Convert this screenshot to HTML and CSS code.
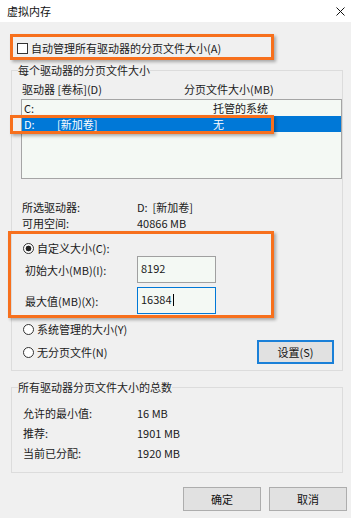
FILE: index.html
```html
<!DOCTYPE html>
<html lang="zh-CN">
  <head>
    <meta charset="UTF-8" />
    <meta name="viewport" content="width=device-width, initial-scale=1.0" />
    <title>虚拟内存</title>
    <link rel="stylesheet" href="styles.css">
  </head>
  <body>
    <div class="titlebar">
      <span class="title">虚拟内存</span>
      <svg class="close" width="9" height="9" viewBox="0 0 9 9">
        <path d="M0.5 0.5 L8.5 8.5 M8.5 0.5 L0.5 8.5" stroke="#111" stroke-width="1" fill="none" />
      </svg>
    </div>

    <div class="main">
      <div class="auto-row"><span class="checkbox"></span>自动管理所有驱动器的分页文件大小(A)</div>

      <fieldset class="group group-drives">
        <legend>每个驱动器的分页文件大小</legend>
        <div class="list-head">
          <span>驱动器 [卷标](D)</span>
          <span>分页文件大小(MB)</span>
        </div>
        <div class="listbox">
          <div class="list-row"><span>C:</span><span></span><span>托管的系统</span></div>
          <div class="list-row selected"><span>D:</span><span>[新加卷]</span><span>无</span></div>
        </div>

        <div class="info-row first"><span>所选驱动器:</span><span>D:&nbsp;&nbsp;[新加卷]</span></div>
        <div class="info-row"><span>可用空间:</span><span>40866 MB</span></div>

        <div class="radio-row custom"><span class="radio checked"></span>自定义大小(C):</div>
        <div class="size-row">
          <span>初始大小(MB)(I):</span>
          <div class="input">8192</div>
        </div>
        <div class="size-row second">
          <span>最大值(MB)(X):</span>
          <div class="input focused">16384<span class="caret"></span></div>
        </div>
        <div class="radio-row sys"><span class="radio"></span>系统管理的大小(Y)</div>
        <div class="radio-row last">
          <span class="radio"></span>无分页文件(N)
          <button class="btn btn-set">设置(S)</button>
        </div>
      </fieldset>

      <fieldset class="group group-total">
        <legend>所有驱动器分页文件大小的总数</legend>
        <div class="total-row first"><span>允许的最小值:</span><span>16 MB</span></div>
        <div class="total-row"><span>推荐:</span><span>1901 MB</span></div>
        <div class="total-row"><span>当前已分配:</span><span>1920 MB</span></div>
      </fieldset>

      <div class="buttons">
        <button class="btn">确定</button>
        <button class="btn">取消</button>
      </div>
    </div>

    <!-- highlight marks drawn over the dialog -->
    <div class="mark mark-auto"></div>
    <div class="mark mark-drive"></div>
    <div class="mark mark-custom"></div>
  </body>
</html>
```

FILE: styles.css
```css
body {
  margin: 0;
  width: 351px;
  height: 518px;
  overflow: hidden;
  position: relative;
  background: #f0f0f0;
  color: #1a1a1a;
  font-family: "Noto Sans CJK SC", "Noto Sans", sans-serif;
  font-size: 11px;
}

.titlebar {
  height: 22px;
  background: #fff;
  display: flex;
  align-items: center;
  justify-content: space-between;
  padding: 0 6px 0 7px;
}

.title {
  font-size: 11px;
  color: #111;
}

.close {
  display: block;
}

.main {
  padding: 0 8px 0 11px;
}

.auto-row {
  margin-top: 13px;
  height: 26px;
  display: flex;
  align-items: center;
  padding-left: 6px;
}

.checkbox {
  width: 11px;
  height: 11px;
  box-sizing: border-box;
  border: 1px solid #333;
  background: #fff;
  margin-right: 3px;
}

.group {
  margin: 0;
  border: 1px solid #dcdcdc;
  padding: 0 0 6px 6px;
  min-width: 0;
}

.group legend {
  padding: 0;
  line-height: 16px;
  color: #222;
}

.group-drives {
  margin-top: 1px;
}

.list-head {
  height: 21px;
  display: grid;
  grid-template-columns: 162px 1fr;
  align-items: center;
  padding-left: 4px;
}

.listbox {
  margin-left: 3px;
  height: 80px;
  box-sizing: border-box;
  border: 1px solid #a5a5a5;
  background: #f4f9f4;
  padding-top: 0;
}

.list-row {
  height: 16px;
  display: grid;
  grid-template-columns: 33px 156px 1fr;
  align-items: center;
  padding-left: 2px;
}

.list-row.selected {
  background: #0078d7;
  color: #fff;
}

.info-row,
.total-row {
  height: 16px;
  display: grid;
  grid-template-columns: 115px 1fr;
  align-items: center;
  padding-left: 4px;
}

.info-row.first {
  margin-top: 20px;
}

.radio-row {
  height: 16px;
  display: flex;
  align-items: center;
  padding-left: 5px;
}

.radio-row.custom {
  margin-top: 9px;
}

.radio-row.sys {
  margin-top: 7px;
}

.radio-row.last {
  margin-top: 3px;
  height: 24px;
}

.radio {
  width: 11px;
  height: 11px;
  box-sizing: border-box;
  border: 1px solid #333;
  border-radius: 50%;
  background: #fff;
  margin-right: 3px;
}

.radio.checked {
  background: radial-gradient(circle, #222 0 2.6px, #fff 3.2px);
}

.size-row {
  height: 27px;
  display: grid;
  grid-template-columns: 112px 79px;
  align-items: center;
  padding-left: 7px;
}

.size-row.second {
  margin-top: 4px;
}

.input {
  height: 27px;
  box-sizing: border-box;
  border: 1px solid #a0a0a0;
  background: #f4f9f4;
  padding: 3px 0 0 3px;
  line-height: 16px;
}

.input.focused {
  border-color: #0078d7;
}

.caret {
  display: inline-block;
  width: 1px;
  height: 12px;
  background: #000;
  margin-left: 1px;
  vertical-align: -2px;
}

.btn {
  width: 78px;
  height: 24px;
  box-sizing: border-box;
  border: 1px solid #adadad;
  background: #e1e1e1;
  font-family: inherit;
  font-size: 11px;
  color: #111;
  padding: 0;
}

.btn-set {
  width: 77px;
  margin-left: auto;
  margin-right: 8px;
  border: 2px solid #1a80d8;
}

.group-total {
  margin-top: 8px;
  padding-bottom: 11px;
}

.total-row {
  grid-template-columns: 114px 1fr;
  padding-left: 5px;
  margin-top: 4px;
}

.total-row.first {
  margin-top: 10px;
}

.buttons {
  margin-top: 14px;
  margin-right: -4px;
  display: flex;
  justify-content: flex-end;
  gap: 8px;
}

.mark {
  position: absolute;
  box-sizing: border-box;
  border: 3px solid #f7701d;
  box-shadow: 2px 2px 3px rgba(0, 0, 0, 0.3);
}

.mark-auto {
  left: 10px;
  top: 34px;
  width: 264px;
  height: 26px;
}

.mark-drive {
  left: 10px;
  top: 115px;
  width: 264px;
  height: 19px;
}

.mark-custom {
  left: 8px;
  top: 231px;
  width: 266px;
  height: 87px;
}
```
